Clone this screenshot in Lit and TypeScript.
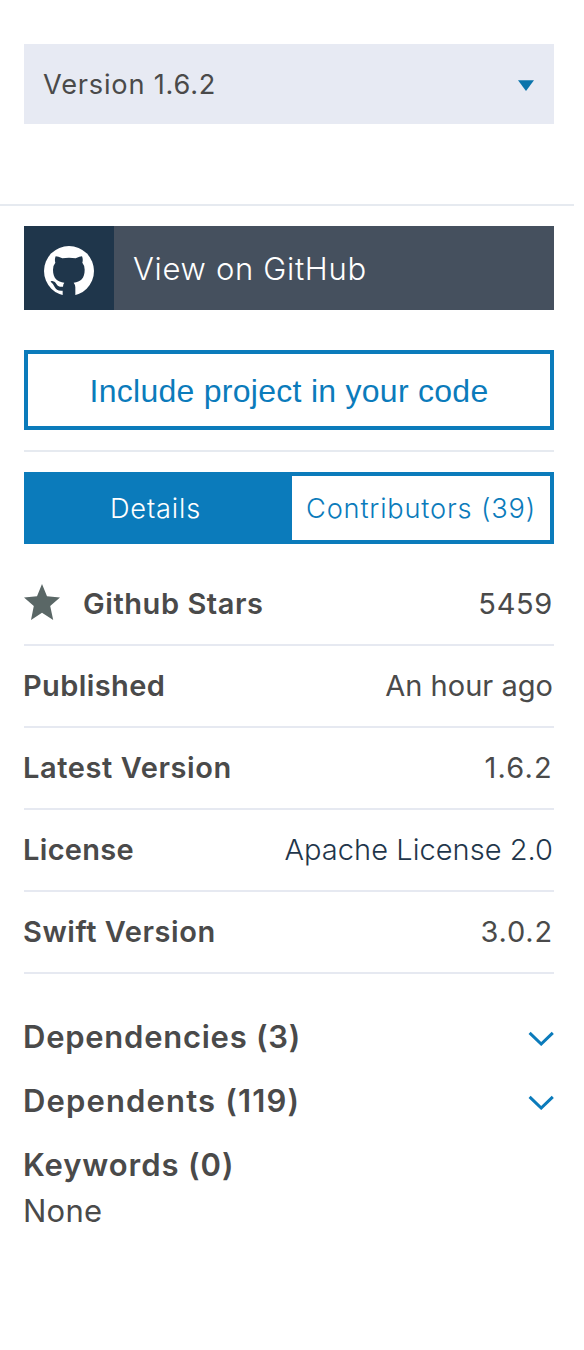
import { LitElement, html, css } from "lit";
import { customElement } from "lit/decorators.js";

interface DetailRow {
  label: string;
  value: string;
  labelSpacing: number;
  valueSpacing: number;
  star?: boolean;
  link?: boolean;
}

const rows: DetailRow[] = [
  { label: "Github Stars", value: "5459", labelSpacing: 0.56, valueSpacing: 0.67, star: true },
  { label: "Published", value: "An hour ago", labelSpacing: 0.4, valueSpacing: 0.02 },
  { label: "Latest Version", value: "1.6.2", labelSpacing: 0.58, valueSpacing: 1.2 },
  { label: "License", value: "Apache License 2.0", labelSpacing: 0.32, valueSpacing: 0.04, link: true },
  { label: "Swift Version", value: "3.0.2", labelSpacing: 0.55, valueSpacing: 0.8 },
];

const chevron = html`<svg class="chevron" width="26" height="15" viewBox="0 0 26 15">
  <path d="M1.6 1.8 13.2 13 24.8 1.8" fill="none" stroke="#0b7bbb" stroke-width="3" />
</svg>`;

@customElement("app-root")
export class AppRoot extends LitElement {
  static styles = css`
    :host {
      display: block;
      width: 574px;
      height: 1350px;
      background: #fff;
      color: #4a4a4a;
      font-family: Inter, sans-serif;
      white-space: nowrap;
    }
    * { box-sizing: border-box; }
    .top {
      height: 206px;
      padding: 44px 20px 0 24px;
      border-bottom: 2px solid #e6eaf0;
    }
    .select {
      display: flex;
      align-items: center;
      justify-content: space-between;
      height: 80px;
      padding: 0 20px 0 19px;
      background: #e7eaf3;
      font-size: 27.2px;
      letter-spacing: 0.78px;
    }
    .caret { display: block; margin-top: 3px; }
    .body { padding: 20px 20px 0 24px; }
    .github {
      display: flex;
      height: 84px;
      background: #45505e;
      color: #fff;
    }
    .mark {
      display: flex;
      justify-content: center;
      width: 90px;
      padding-top: 20px;
      background: #1f364b;
    }
    .github-label {
      padding-left: 19px;
      font-size: 31px;
      font-weight: 350;
      line-height: 85px;
      letter-spacing: 0.68px;
    }
    .include {
      height: 80px;
      margin-top: 40px;
      border: 4px solid #0b7bbb;
      color: #0b7bbb;
      font-family: "Liberation Sans", Arial, sans-serif;
      font-size: 32px;
      line-height: 75px;
      letter-spacing: 0.27px;
      text-align: center;
    }
    .rule { height: 2px; margin: 20px 0; background: #e6eaf0; }
    .tabs {
      display: flex;
      height: 72px;
      border: 4px solid #0b7bbb;
      color: #0b7bbb;
      font-size: 27.2px;
      font-weight: 350;
      line-height: 65px;
      letter-spacing: 0.82px;
      text-align: center;
    }
    .tab { flex: 1; }
    .tab.active { flex: none; width: 264px; padding-right: 9px; background: #0b7bbb; color: #fff; }
    .rows { margin-top: 20px; }
    .row {
      display: flex;
      align-items: center;
      height: 82px;
      padding-bottom: 2px;
      border-bottom: 2px solid #e6e9f1;
      font-size: 29px;
    }
    .star { margin-right: 23px; margin-top: -2px; }
    .label { flex: 1; font-weight: 600; margin-left: -1px; }
    .value { margin-right: 1px; font-weight: 370; }
    .value.link { color: #1f364b; font-weight: 300; }
    .group {
      display: flex;
      align-items: center;
      justify-content: space-between;
      height: 64px;
      padding-bottom: 2px;
      font-size: 31px;
      font-weight: 600;
    }
    .groups { margin-top: 31px; }
    .group-title { margin-left: -1px; }
    .chevron { margin-top: 5px; }
    .none { font-size: 31px; font-weight: 370; line-height: 28px; letter-spacing: 0.25px; margin-left: -1px; }
  `;

  render() {
    return html`
      <div class="top">
        <div class="select">
          <span>Version 1.6.2</span>
          <svg class="caret" width="16" height="11" viewBox="0 0 16 11">
            <path d="M0 .3H16L8 11Z" fill="#0b74ab" />
          </svg>
        </div>
      </div>
      <div class="body">
        <div class="github">
          <div class="mark">
            <svg width="50" height="50" viewBox="0 0 150 150">
              <circle cx="75" cy="75" r="75" fill="#fff" />
              <path
                fill="#1f364b"
                d="M35 31Q42 31 55 37Q75 33 95 37Q108 31 114 31Q118 40 115 50Q122 58 122 71C122 97 110 107 89 110Q94 116 94 124V152H56V134C42 135 36 131 32 123Q28 113 20 107Q20 104 25 105C38 107 37 121 48 122H57Q57 115 61 110C40 107 27 97 27 71Q27 58 34 50Q31 40 35 31Z"
              />
            </svg>
          </div>
          <div class="github-label">View on GitHub</div>
        </div>
        <div class="include">Include project in your code</div>
        <div class="rule"></div>
        <div class="tabs">
          <div class="tab active">Details</div>
          <div class="tab">Contributors (39)</div>
        </div>
        <div class="rows">
          ${rows.map(
            (r) => html`<div class="row">
              ${r.star
                ? html`<svg class="star" width="37" height="37" viewBox="0 0 37 37">
                    <path
                      fill="#5a6766"
                      d="M18 0 23 12.3 36 13.4 26.2 22 29.2 36 18 28.8 7 36 9.8 22 0 13.4 13 12.3Z"
                    />
                  </svg>`
                : ""}
              <span class="label" style="letter-spacing:${r.labelSpacing}px">${r.label}</span>
              <span class="value ${r.link ? "link" : ""}" style="letter-spacing:${r.valueSpacing}px">${r.value}</span>
            </div>`
          )}
        </div>
        <div class="groups">
          <div class="group"><span class="group-title" style="letter-spacing:0.74px">Dependencies (3)</span>${chevron}</div>
          <div class="group"><span class="group-title" style="letter-spacing:1.15px">Dependents (119)</span>${chevron}</div>
          <div class="group"><span class="group-title" style="letter-spacing:0.92px">Keywords (0)</span></div>
          <div class="none">None</div>
        </div>
      </div>
    `;
  }
}
